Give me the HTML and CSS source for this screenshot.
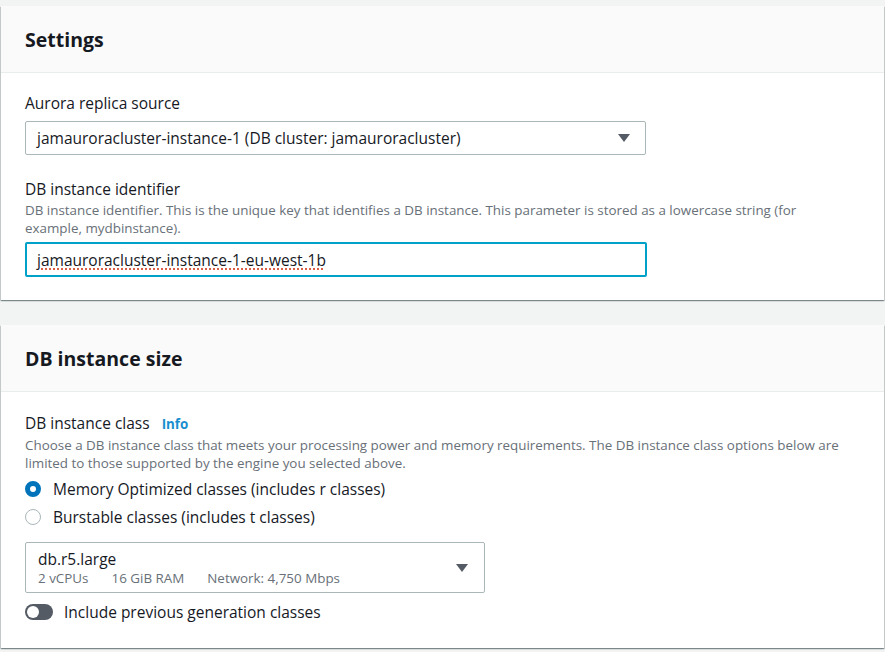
FILE: index.html
```html
<!DOCTYPE html>
<html>
<head>
<meta charset="utf-8">
<link rel="stylesheet" href="styles.css">
</head>
<body>
<div class="page">
  <section class="card card1">
    <div class="card-header"><h2>Settings</h2></div>
    <div class="card-body">
      <div class="field">
        <div class="label">Aurora replica source</div>
        <div class="select">
          <span>jamauroracluster-instance-1 (DB cluster: jamauroracluster)</span>
          <svg class="caret" width="12" height="8" viewBox="0 0 12 8"><path d="M0 0h12L6 8z" fill="#545b64"/></svg>
        </div>
      </div>
      <div class="field">
        <div class="label">DB instance identifier</div>
        <div class="desc">DB instance identifier. This is the unique key that identifies a DB instance. This parameter is stored as a lowercase string (for example, mydbinstance).</div>
        <div class="input"><span class="spell">jamauroracluster-instance-1-eu-west-1b</span></div>
      </div>
    </div>
  </section>

  <section class="card card2">
    <div class="card-header"><h2>DB instance size</h2></div>
    <div class="card-body">
      <div class="label">DB instance class <a class="info">Info</a></div>
      <div class="desc">Choose a DB instance class that meets your processing power and memory requirements. The DB instance class options below are limited to those supported by the engine you selected above.</div>
      <div class="radios">
        <div class="radio"><span class="dot checked"></span>Memory Optimized classes (includes r classes)</div>
        <div class="radio"><span class="dot"></span>Burstable classes (includes t classes)</div>
      </div>
      <div class="select select-lg">
        <div>
          <div class="opt-title">db.r5.large</div>
          <div class="opt-tags"><span>2 vCPUs</span><span>16 GiB RAM</span><span>Network: 4,750 Mbps</span></div>
        </div>
        <svg class="caret" width="12" height="8" viewBox="0 0 12 8"><path d="M0 0h12L6 8z" fill="#545b64"/></svg>
      </div>
      <div class="toggle-row"><span class="toggle"><span class="knob"></span></span>Include previous generation classes</div>
    </div>
  </section>
</div>
</body>
</html>
```

FILE: styles.css
```css
* { box-sizing: border-box; }
html, body { margin: 0; padding: 0; }
body {
  background: #f2f3f3;
  font-family: "Open Sans", "Noto Sans", sans-serif;
  color: #16191f;
  width: 885px;
  height: 652px;
  overflow: hidden;
}
.page { padding-top: 6px; padding-left: 1px; }
.card {
  background: #fff;
  width: 883px;
  box-shadow: 0 1px 1px 0 rgba(0,28,36,0.3), 1px 1px 1px 0 rgba(0,28,36,0.15), -1px 1px 1px 0 rgba(0,28,36,0.15);
}
.card2 { margin-top: 25px; }
.card-header {
  background: #fafafa;
  height: 67px;
  border-bottom: 1px solid #eaeded;
  display: flex;
  align-items: center;
  padding: 0 24px;
}
.card-header h2 {
  margin: 0;
  font-size: 19.5px;
  font-weight: 700;
  line-height: 24px;
  padding-top: 2px;
}
.card-body { padding: 19px 24px 23px 24px; }
.card2 .card-body { padding: 20px 24px 22px 24px; }
.field + .field { margin-top: 23px; }
.label { font-size: 15.5px; line-height: 22px; }
.info { color: #1a8fce; font-weight: 700; font-size: 13.4px; margin-left: 8px; }
.desc { font-size: 13.4px; color: #687078; line-height: 18px; margin-top: 1px; max-width: 825px; }
.select {
  margin-top: 7px;
  width: 621px;
  height: 34px;
  border: 1px solid #aab7b8;
  border-radius: 2px;
  display: flex;
  align-items: center;
  justify-content: space-between;
  padding: 0 15px 0 11px;
  font-size: 15.5px;
}
.caret { flex: none; }
.input {
  margin-top: 5px;
  width: 622px;
  height: 35px;
  border: 2px solid #00a1c9;
  border-radius: 2px;
  display: flex;
  align-items: center;
  padding: 0 10px;
  font-size: 15.5px;
}
.spell { text-decoration: underline dotted #d13212; text-underline-offset: 3px; }
.radios { margin-top: 3px; }
.radio { display: flex; align-items: center; font-size: 15.5px; height: 28px; }
.dot {
  width: 16px; height: 16px; border-radius: 50%;
  border: 1px solid #aab7b8; margin-right: 12px; flex: none;
}
.dot.checked { border: 5px solid #0073bb; }
.select-lg {
  width: 460px;
  height: 51px;
  margin-top: 11px;
  padding: 0 16px 0 12px;
}
.opt-title { font-size: 15.5px; line-height: 20px; }
.opt-tags { font-size: 13.4px; color: #687078; line-height: 18px; }
.opt-tags span + span { margin-left: 23px; }
.toggle-row { display: flex; align-items: center; font-size: 15.5px; margin-top: 5px; height: 28px; }
.toggle {
  width: 28px; height: 16px; border-radius: 8px; background: #545b64;
  margin-right: 11px; position: relative; flex: none;
}
.knob { position: absolute; left: 2px; top: 2px; width: 12px; height: 12px; border-radius: 50%; background: #fff; }
```
